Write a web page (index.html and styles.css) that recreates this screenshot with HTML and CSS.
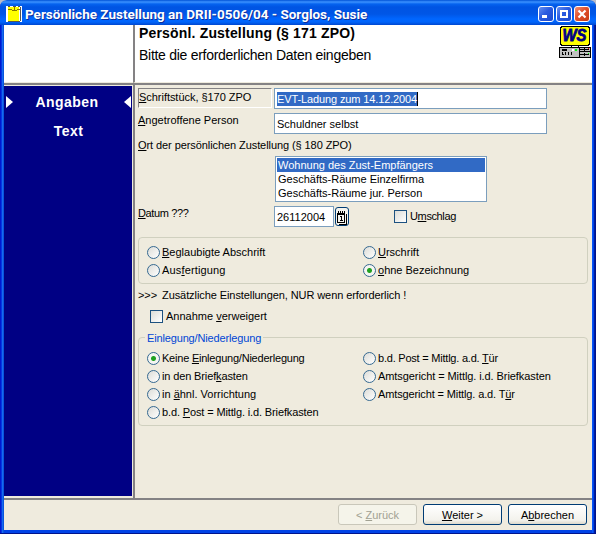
FILE: index.html
```html
<!DOCTYPE html>
<html lang="de">
<head>
<meta charset="utf-8">
<title>Persönliche Zustellung</title>
<link rel="stylesheet" href="styles.css">
</head>
<body>
<div class="window">
  <header class="titlebar">
    <svg class="app-icon" width="16" height="16" shape-rendering="crispEdges"><path fill="#fff" d="M0 0h16v16H0z"/><path fill="#ff0" d="M2 1h11v14H2z"/><path fill="#555" d="M2 15h12v1H2zM14 1h1v14h-1zM2 0h2v1H2zM12 0h2v1h-2zM7 0h3v1H7z"/><path fill="#887800" d="M2 3h4v1H2zM6 4h5v1H6zM11 3h3v1h-3zM8 1h1v3H8z"/></svg>
    <h1 class="title">Persönliche Zustellung an DRII-0506/04 - Sorglos, Susie</h1>
    <div class="controls">
      <span class="ctl"><svg width="14" height="14"><path fill="#fff" d="M3 8h5v3H3z"/></svg></span>
      <span class="ctl"><svg width="14" height="14" shape-rendering="crispEdges"><path fill="#fff" fill-rule="evenodd" d="M3 3h8v8H3zM5 5v4h4V5z"/></svg></span>
      <span class="ctl close"><svg width="14" height="14"><path fill="none" stroke="#fff" stroke-width="2.2" d="M3.5 3.5l7 7M10.5 3.5l-7 7"/></svg></span>
    </div>
  </header>
  <div class="banner">
    <div class="banner-left"></div>
    <div class="banner-main">
      <div>
        <h2 class="heading">Persönl. Zustellung (§ 171 ZPO)</h2>
        <p class="sub">Bitte die erforderlichen Daten eingeben</p>
      </div>
      <svg class="logo" width="32" height="32" viewBox="0 0 32 32" shape-rendering="crispEdges">
        <path fill="#000" d="M2 0h28v1h1v18h-1v1H2v-1H1V1h1z"/><path fill="#ff0" d="M3 1h26v1h1v16h-1v1H3v-1H2V2h1z"/>
        <text x="3.5" y="15" textLength="24" lengthAdjust="spacingAndGlyphs" class="logo-text">WS</text>
        <path fill="#000" d="M12 20h1v1h-1zM19 20h1v1h-1zM0 21h32v11H0z"/><path fill="#c0c0c0" d="M1 22h19v9H1zM21 22h10v9H21z"/>
        <path fill="#000" d="M3 23h5v2H3zM3 26h1v3H3zM6 26h1v3H6zM9 26h1v3H9zM12 26h1v3h-1zM4 28h1v1H4zM21 23h9v1h-9zM21 25h10v1H21zM21 28h9v1h-9zM25 22h1v3h-1zM25 27h1v3h-1z"/>
        <path fill="#fff" d="M13 23h2v2h-2z"/><path fill="#0f0" d="M16 23h2v2h-2zM29 27h1v1h-1z"/><path fill="red" d="M29 22h1v1h-1z"/>
      </svg>
    </div>
  </div>
  <div class="body">
    <nav class="side">
      <div class="nav-item"><svg width="7" height="12"><path fill="#fff" d="M0 0l7 6-7 6z"/></svg><span class="nav-a">Angaben</span><svg width="7" height="12"><path fill="#fff" d="M7 0L0 6l7 6z"/></svg></div>
      <div class="nav-item second"><span class="nav-b">Text</span></div>
    </nav>
    <main class="main">
      <div class="row r1"><div class="label boxed"><u>S</u>chriftstück, §170 ZPO</div><div class="input"><span class="selected">EVT-Ladung zum 14.12.2004</span></div></div>
      <div class="row r2"><div class="label"><u>A</u>ngetroffene Person</div><div class="input">Schuldner selbst</div></div>
      <div class="label place t1"><u>O</u>rt der persönlichen Zustellung (§ 180 ZPO)</div>
      <ul class="list"><li class="on">Wohnung des Zust-Empfängers</li><li>Geschäfts-Räume Einzelfirma</li><li>Geschäfts-Räume jur. Person</li></ul>
      <div class="row date-row">
        <div class="label t4"><u>D</u>atum ???</div><div class="input date">26112004</div>
        <span class="cal"><svg width="12" height="15" shape-rendering="crispEdges"><path fill="#000" fill-rule="evenodd" d="M1 3h8v10H1zM2 5v7h6V5z"/><path fill="#000" d="M2 1h1v2H2zM4 1h1v2H4zM6 1h1v2H6zM8 1h1v2H8zM10 4h1v11H3v-1h7zM4 6h2v5H5V7H4zM4 10h3v1H4z"/></svg></span>
        <div class="opt envelope t4"><i class="check"></i><span>U<u>m</u>schlag</span></div>
      </div>
      <section class="group g1">
        <div class="opt"><i class="radio"></i><span><u>B</u>eglaubigte Abschrift</span></div><div class="opt"><i class="radio"></i><span><u>U</u>rschrift</span></div>
        <div class="opt wide"><i class="radio"></i><span>Aus<u>f</u>ertigung</span></div><div class="opt"><i class="radio sel"></i><span><u>o</u>hne Bezeichnung</span></div>
      </section>
      <p class="note t1"><span class="arrows">&gt;&gt;&gt;</span><span>Zusätzliche Einstellungen, NUR wenn erforderlich !</span></p>
      <div class="opt refuse"><i class="check"></i><span>Annahme <u>v</u>erweigert</span></div>
      <section class="group g2">
        <h3 class="legend">Einlegung/Niederlegung</h3>
        <div class="opt t3"><i class="radio sel"></i><span>Keine <u>E</u>inlegung/Niederlegung</span></div><div class="opt t3"><i class="radio"></i><span>b.d. Post = Mittlg. a.d. <u>T</u>ür</span></div>
        <div class="opt t2"><i class="radio"></i><span>in den Brief<u>k</u>asten</span></div><div class="opt t1"><i class="radio"></i><span>Amtsgericht = Mittlg. i.d. Briefkasten</span></div>
        <div class="opt"><i class="radio"></i><span>in <u>ä</u>hnl. Vorrichtung</span></div><div class="opt t2"><i class="radio"></i><span>Amtsgericht = Mittlg. a.d. T<u>ü</u>r</span></div>
        <div class="opt t2"><i class="radio"></i><span>b.d. <u>P</u>ost = Mittlg. i.d. Briefkasten</span></div>
      </section>
    </main>
  </div>
  <footer class="footer">
    <div class="btn disabled">&lt; <u>Z</u>urück</div><div class="btn"><u>W</u>eiter &gt;</div><div class="btn">A<u>b</u>brechen</div>
  </footer>
</div>
</body>
</html>
```
FILE: styles.css
```css
* { box-sizing: border-box; margin: 0; padding: 0; }
body { width: 596px; height: 534px; overflow: hidden; background: #b8bccb; font: 11px/14px "Liberation Sans", Arial, sans-serif; color: #000; }
u { text-decoration: underline; text-decoration-thickness: 1px; text-underline-offset: 1px; }
.window { width: 596px; height: 534px; display: flex; flex-direction: column; border-radius: 7px 7px 0 0; background: linear-gradient(90deg, #0019cf 0 1px, #0536e2 1px 2px, #166aee 2px 3px, #0855dd 3px 4px, #efebde 4px 592px, #0855f5 592px 593px, #0042e6 593px 594px, #001ea0 594px 595px, #00138c 595px); padding: 0 4px; border-bottom: 1px solid #00138c; overflow: hidden; }
.titlebar { height: 25px; flex: none; margin: 0 -4px; padding: 3px 6px 0; display: flex; align-items: center; background: linear-gradient(#0052d6 0, #3c92ff 2px, #0563ef 4px, #0054e3 7px, #0056e6 14px, #0066ff 19px, #0064fa 22px, #0047cf 25px); }
.app-icon { flex: none; }
.title { flex: 1; margin-left: 3px; color: #fff; font: bold 13.5px/16px Roboto, "Open Sans", sans-serif; white-space: nowrap; text-shadow: 1px 1px #0f2f9a; letter-spacing: 0; }
.controls { display: flex; gap: 2px; }
.ctl { width: 16px; height: 16px; border: 1px solid #fff; border-radius: 3px; background: linear-gradient(135deg, #6690f0, #2a5be0 45%, #1c49cd); display: flex; }
.ctl svg { flex: none; }
.ctl.close { background: linear-gradient(135deg, #ef9075, #e0502c 45%, #c93c14); }
.banner { height: 60px; flex: none; display: flex; border-bottom: 2px solid #848284; background: #fff; }
.banner-left { width: 129px; border-bottom: 1px solid #efebde; }
.banner-main { flex: 1; border-left: 2px solid #848284; border-bottom: 1px solid #efebde; padding: 1px 1px 0 4px; display: flex; justify-content: space-between; }
.heading { font: bold 14px/16px "Liberation Sans", Arial, sans-serif; letter-spacing: .17px; white-space: nowrap; margin-top: -1px; }
.sub { font-size: 14px; line-height: 16px; letter-spacing: -.28px; margin-top: 6px; white-space: nowrap; }
.logo-text { font: italic bold 16px "Liberation Sans", Arial, sans-serif; fill: #000084; stroke: #000084; stroke-width: .8px; }
.body { height: 413px; flex: none; display: flex; }
.side { width: 128px; height: 410px; margin: 1px 1px 0 0; background: #000084; color: #fff; font: bold 14px/16px "Liberation Sans", Arial, sans-serif; letter-spacing: .45px; padding-top: 8px; }
.nav-item { display: flex; justify-content: space-between; align-items: center; height: 16px; padding: 0 1px 0 2px; }
.nav-a { margin-right: 3px; }
.nav-item.second { justify-content: center; margin-top: 13px; }
.main { flex: 1; border-left: 2px solid #848284; padding: 3px 4px 0 3px; }
.row { display: flex; height: 21px; white-space: nowrap; }
.label { width: 136px; flex: none; white-space: nowrap; }
.t1 { letter-spacing: -.08px; }
.t2 { letter-spacing: -.13px; }
.t3 { letter-spacing: -.22px; }
.t4 { letter-spacing: -.38px; }
.wide { letter-spacing: .15px; }
.boxed { width: 134px; height: 20px; margin-right: 2px; border: 1px solid; border-color: #848284 #fff #fff #848284; padding: 1px 0 0; letter-spacing: -.04px; }
.input { width: 273px; height: 21px; border: 1px solid #7b9ebd; background: #fff; padding: 2px; line-height: 16px; }
.selected { display: inline-block; height: 14px; line-height: 14px; background: #316ac5; color: #fff; border-right: 1px solid #000; letter-spacing: -.12px; }
.r2 { margin-top: 4px; }
.place { margin-top: 4px; }
.list { list-style: none; width: 212px; height: 46px; margin: 4px 0 0 137px; border: 1px solid #7b9ebd; background: #fff; padding: 1px; white-space: nowrap; }
.list li { height: 14px; padding-left: 1px; }
.list .on { background: #316ac5; color: #fff; }
.date-row { margin-top: 4px; }
.input.date { width: 60px; }
.cal { width: 14px; height: 19px; margin: 1px 0 0 1px; border: 1px solid #003c74; border-radius: 3px; background: #f5f4ee; padding-top: 2px; display: flex; }
.cal svg { flex: none; }
.opt { display: flex; align-items: center; height: 18px; white-space: nowrap; }
.check { width: 13px; height: 13px; flex: none; border: 1px solid #1c5180; background: linear-gradient(135deg, #dcdcd7, #fff); margin-right: 3px; }
.radio { width: 13px; height: 13px; flex: none; border: 1px solid #356991; border-radius: 50%; background: linear-gradient(135deg, #dcdcd7, #fff); margin-right: 2px; }
.radio.sel { background: radial-gradient(circle at center, #21a121 0 2px, #f5f5f2 3px); }
.envelope { margin: 1px 0 0 45px; }
.group { border: 1px solid #d0d0bf; border-radius: 4px; width: 450px; display: grid; grid-template-columns: 216px 1fr; grid-auto-rows: 18px; padding-left: 8px; }
.g1 { height: 47px; margin-top: 10px; padding-top: 5px; }
.note { display: flex; margin-top: 4px; white-space: nowrap; }
.arrows { width: 24px; }
.refuse { margin: 5px 0 0 12px; }
.g2 { height: 89px; margin-top: 12px; padding-top: 11px; position: relative; }
.legend { position: absolute; left: 6px; top: -7px; padding: 0 2px; background: #efebde; color: #0046d5; font: 11px/14px "Liberation Sans", Arial, sans-serif; letter-spacing: -.15px; }
.footer { height: 35px; padding: 4px 5px 0 0; border: solid; border-width: 2px 0 3px; border-color: #848284 transparent #0042e6; display: flex; justify-content: flex-end; gap: 6px; }
.btn { width: 79px; height: 21px; border: 1px solid #003c74; border-radius: 3px; background: linear-gradient(#fff, #f3f2ec 80%, #dcd8cc); text-align: center; line-height: 20px; }
.btn.disabled { border-color: #c9c7ba; background: #f5f4ea; color: #a1a192; }
```
